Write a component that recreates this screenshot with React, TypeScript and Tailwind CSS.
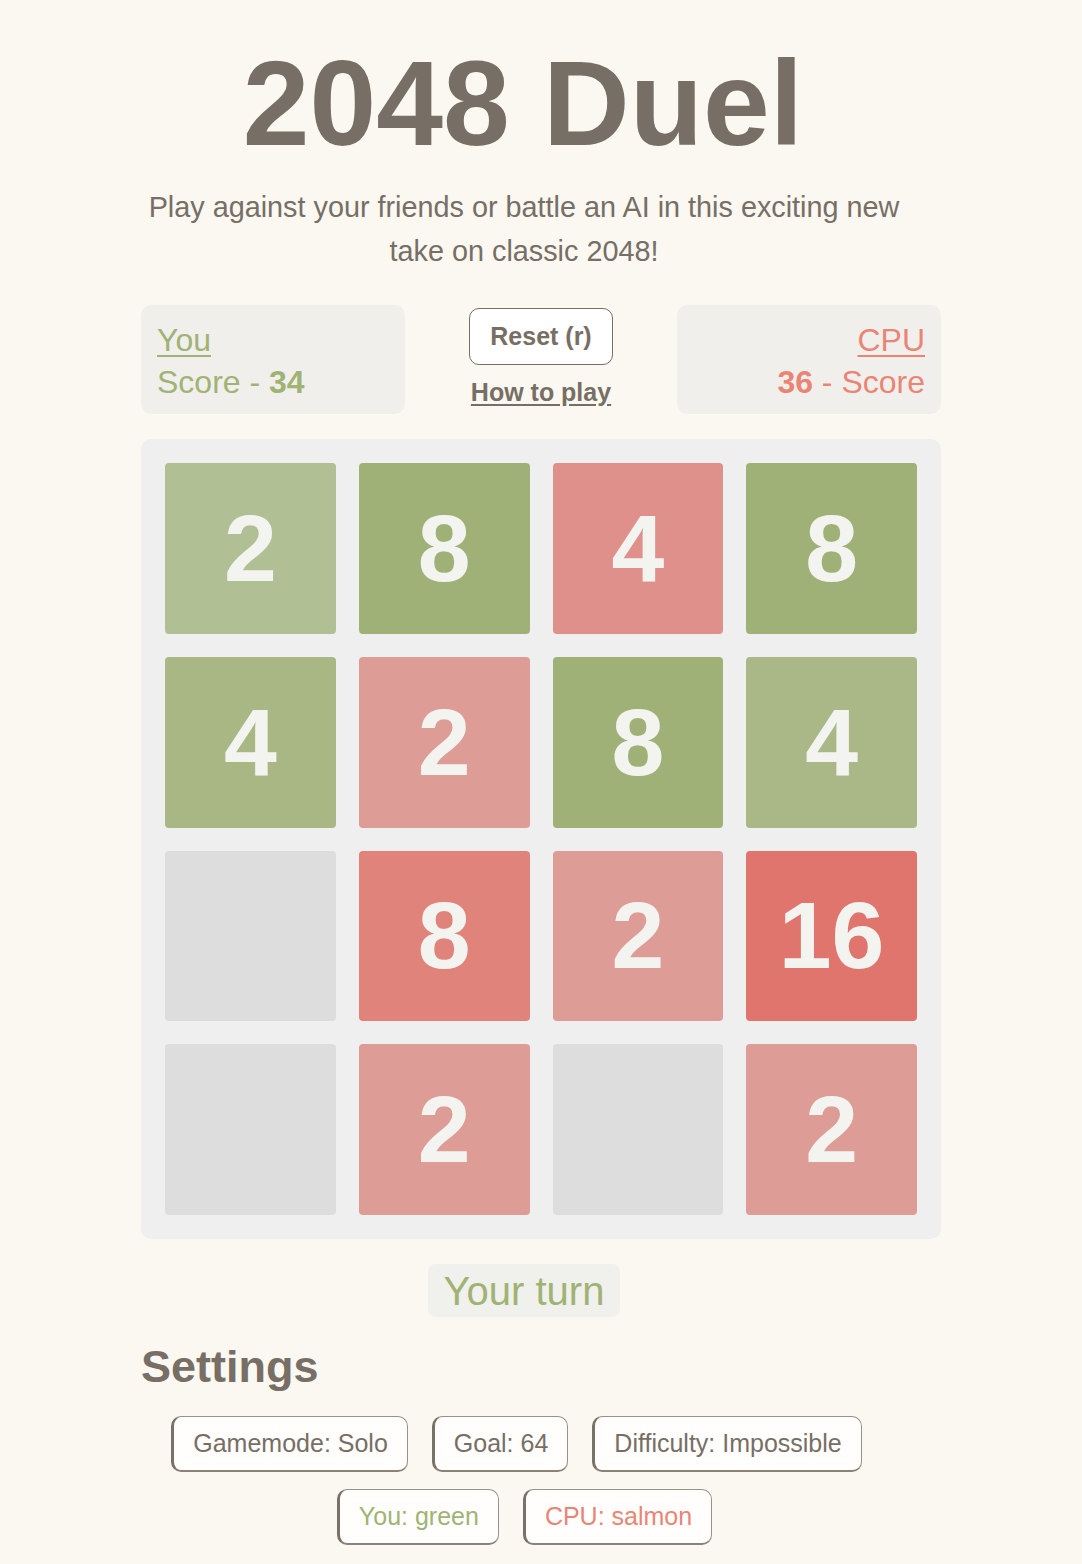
import React from 'react';

type Tile = { value: number | null; bg: string };

const board: Tile[][] = [
  [
    { value: 2, bg: 'bg-[#b1bf94]' },
    { value: 8, bg: 'bg-[#a0b177]' },
    { value: 4, bg: 'bg-[#e0908a]' },
    { value: 8, bg: 'bg-[#a0b177]' },
  ],
  [
    { value: 4, bg: 'bg-[#a8b784]' },
    { value: 2, bg: 'bg-[#de9c97]' },
    { value: 8, bg: 'bg-[#a0b177]' },
    { value: 4, bg: 'bg-[#aab887]' },
  ],
  [
    { value: null, bg: 'bg-[#dddddd]' },
    { value: 8, bg: 'bg-[#e0847b]' },
    { value: 2, bg: 'bg-[#de9c97]' },
    { value: 16, bg: 'bg-[#e0756d]' },
  ],
  [
    { value: null, bg: 'bg-[#dddddd]' },
    { value: 2, bg: 'bg-[#de9c97]' },
    { value: null, bg: 'bg-[#dddddd]' },
    { value: 2, bg: 'bg-[#de9c97]' },
  ],
];

function SettingButton({ label, color }: { label: string; color: string }) {
  return (
    <button
      className={`h-[56px] px-[19px] rounded-[10px] bg-[#fffefc] border border-[#9a928a] border-l-[3px] border-l-[#7a7169] border-b-[2px] border-b-[#8a8178] text-[25px] leading-none ${color}`}
    >
      {label}
    </button>
  );
}

export default function App() {
  return (
    <div className="min-h-[1564px] bg-[#faf8f1] font-['Liberation_Sans',Arial,sans-serif] text-[#776e65] pt-[43px]">
      <div className="w-[800px] mx-auto flex flex-col">
        {/* Title */}
        <h1 className="pr-[36px] text-center text-[120px] font-bold leading-none">2048 Duel</h1>
        <p className="mt-[22px] pr-[34px] text-center text-[28.8px] leading-[44px]">
          Play against your friends or battle an AI in this exciting new take on classic 2048!
        </p>

        {/* Score row */}
        <div className="mt-[32px] flex justify-between items-start">
          <div className="w-[264px] h-[109px] rounded-[10px] bg-[#f0efec] px-4 pt-[14px] text-[#a0b374] text-[32px] leading-[42px]">
            <div className="underline underline-offset-[4px] decoration-2">You</div>
            <div>
              Score - <span className="font-bold">34</span>
            </div>
          </div>

          <div className="flex flex-col items-center pt-[3px]">
            <button className="w-[144px] h-[57px] rounded-[10px] border border-[#776e65] bg-white text-[25px] font-bold">
              Reset (r)
            </button>
            <a className="mt-[9px] text-[25px] font-bold underline underline-offset-[3px]">How to play</a>
          </div>

          <div className="w-[264px] h-[109px] rounded-[10px] bg-[#f0efec] px-4 pt-[14px] text-right text-[#ea8576] text-[32px] leading-[42px]">
            <div className="underline underline-offset-[4px] decoration-2">CPU</div>
            <div>
              <span className="font-bold">36</span> - Score
            </div>
          </div>
        </div>

        {/* Board */}
        <div className="mt-[25px] rounded-[10px] bg-[#efefef] p-6 grid grid-cols-4 gap-[23px]">
          {board.flat().map((tile, i) => (
            <div
              key={i}
              className={`aspect-square rounded-[4px] flex items-center justify-center text-[95px] font-bold text-[#f3f3f0] leading-none ${tile.bg}`}
            >
              {tile.value}
            </div>
          ))}
        </div>

        {/* Turn indicator */}
        <div className="mt-[25px] self-center -translate-x-[17px] h-[53px] px-[16px] rounded-[8px] bg-[#f0f0ec] flex items-center text-[40px] text-[#a0b374]">
          Your turn
        </div>

        {/* Settings */}
        <h2 className="mt-[23px] text-[45px] font-bold leading-[53px]">Settings</h2>
        <div className="mt-[23px] flex justify-center gap-[24px] pr-[49px]">
          <SettingButton label="Gamemode: Solo" color="text-[#776e65]" />
          <SettingButton label="Goal: 64" color="text-[#776e65]" />
          <SettingButton label="Difficulty: Impossible" color="text-[#776e65]" />
        </div>
        <div className="mt-[17px] flex justify-center gap-[24px] pr-[33px]">
          <SettingButton label="You: green" color="text-[#a0b374]" />
          <SettingButton label="CPU: salmon" color="text-[#ea8576]" />
        </div>
      </div>
    </div>
  );
}
